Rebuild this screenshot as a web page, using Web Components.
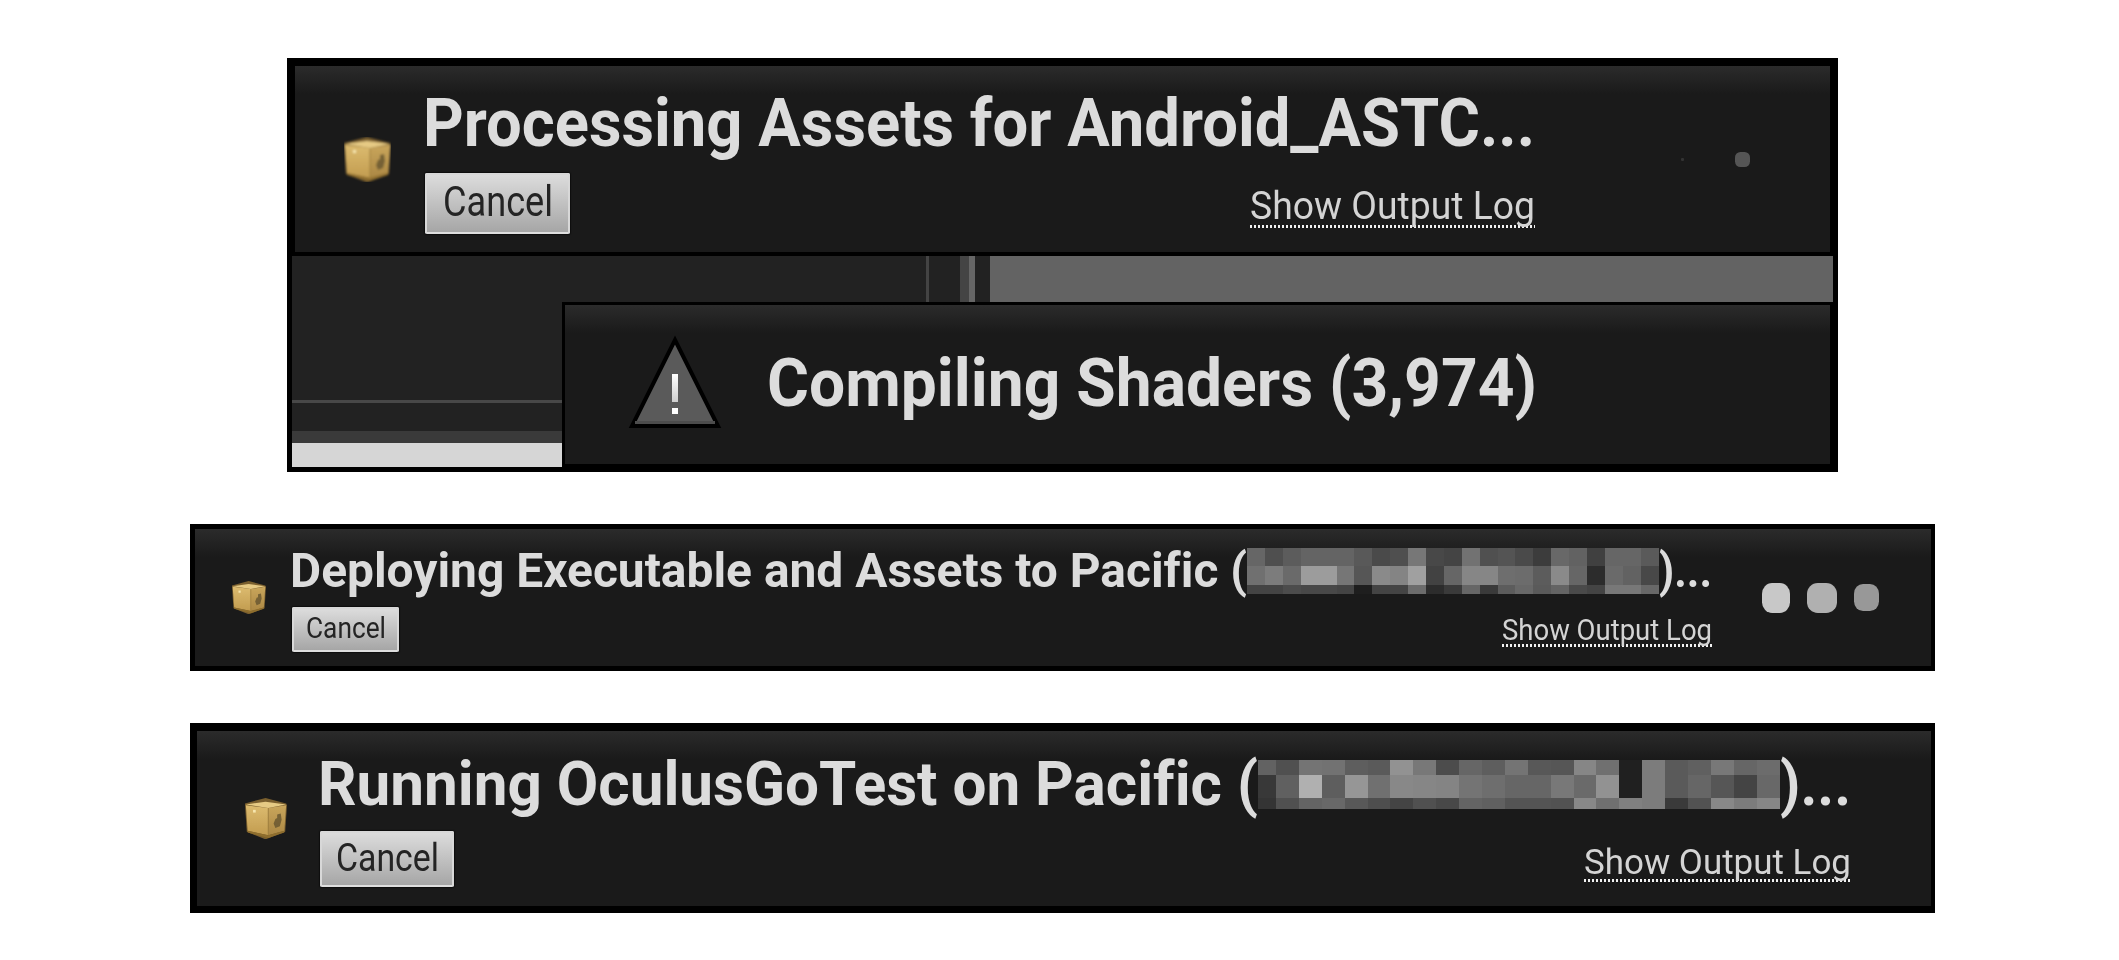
<!DOCTYPE html>
<html>
<head>
<meta charset="utf-8">
<title>Notifications</title>
<style>
  html, body { margin: 0; background: #fff; }
  body {
    display: flex;
    flex-direction: column;
    align-items: center;
    gap: 52px;
    padding: 58px 0 0 6px;
    height: 902px;
    overflow: hidden;
    font-family: Roboto, "Liberation Sans", sans-serif;
    font-variant-ligatures: none;
  }
  .processing { --pad-left: 49px; --icon-gap: 32px; --pad-top: 21px; --row-gap: 12px; --link-drop: 6px; --pad-right: 80px; height: 186px; margin: 0 3px 4px; }
  .compiling { --pad-left: 65px; --icon-gap: 47px; --pad-top: 42px; --row-gap: 0px; height: 159px; }
  .deploying { --pad-left: 37px; --icon-gap: 24px; --pad-top: 14px; --row-gap: 8px; --link-drop: 5px; --pad-right: 52px; height: 137px; }
  .running { --pad-left: 48px; --icon-gap: 31px; --pad-top: 19px; --row-gap: 13px; --link-drop: 5px; height: 175px; }
  ue-button { margin-left: 2px; }
</style>
</head>
<body>

<ue-frame style="--w:1551px; --p:8px 5px 5px">
  <ue-notification class="processing">
    <ue-cube slot="icon" size="47 45"></ue-cube>
    <ue-title slot="title"><ue-text size="66" fit="1112" lh="74" weight="700" color="#dcdcdc">Processing Assets for Android_ASTC...</ue-text></ue-title>
    <ue-button slot="button" w="145" h="61" size="42" fit="110">Cancel</ue-button>
    <ue-log slot="link" size="38" fit="285" lh="40"></ue-log>
    <ue-throbber slot="throbber" gap="51" pieces="3 3 #333333,15 15 #555555"></ue-throbber>
  </ue-notification>
  <ue-stack>
    <ue-backdrop></ue-backdrop>
    <ue-frame style="--w:1271px; --p:3px; justify-self:end; align-self:end">
      <ue-notification class="compiling">
        <ue-warning slot="icon"></ue-warning>
        <ue-title slot="title"><ue-text size="66" fit="770" lh="74" weight="700" color="#dcdcdc">Compiling Shaders (3,974)</ue-text></ue-title>
      </ue-notification>
    </ue-frame>
  </ue-stack>
</ue-frame>

<ue-frame style="--w:1745px; --p:5px 4px 5px 5px">
  <ue-notification class="deploying">
    <ue-cube slot="icon" size="34 33"></ue-cube>
    <ue-title slot="title">
      <ue-text size="48" fit="957" lh="56" weight="700" color="#dcdcdc">Deploying Executable and Assets to Pacific (</ue-text>
      <ue-blur first="18" col="17.9" heights="18 19 9"
        r1="66 4f 5c 64 64 64 59 4a 4f 77 48 44 72 50 54 4a 3c 68 62 40 66 66 5a"
        r2="70 7c 6a 9c 9c 76 56 8a 84 a0 42 66 86 86 6e 6c 5c 8a 66 2c 6a 62 48"
        r3="44 44 4c 48 48 44 1e 44 44 6c 2c 3a 66 3a 5c 68 5a 64 4a 44 78 78 68"></ue-blur>
      <ue-text size="48" fit="53" lh="56" weight="700" color="#dcdcdc">)...</ue-text>
    </ue-title>
    <ue-button slot="button" w="107" h="45" size="30" fit="80">Cancel</ue-button>
    <ue-log slot="link" size="29" fit="210" lh="30"></ue-log>
    <ue-throbber slot="throbber" gap="17" pieces="28 30 #c8c8c8,30 30 #b0b0b0,25 27 #989898"></ue-throbber>
  </ue-notification>
</ue-frame>

<ue-frame style="--w:1745px; --p:8px 4px 7px 7px">
  <ue-notification class="running">
    <ue-cube slot="icon" size="42 41"></ue-cube>
    <ue-title slot="title">
      <ue-text size="61" fit="940" lh="68" weight="700" color="#dcdcdc">Running OculusGoTest on Pacific (</ue-text>
      <ue-blur first="18" col="22.9" heights="15 23 11"
        r1="62 50 74 72 5e 5a 92 78 4c 66 5e 74 58 56 86 70 20 7c 5a 60 78 66 6c"
        r2="38 60 b0 5e 96 70 88 86 84 74 6e 66 66 78 6a 92 20 7c 5a 66 56 44 68"
        r3="34 50 64 68 58 4e 44 50 48 64 60 54 54 52 88 70 80 7c 3a 52 88 7c 86"></ue-blur>
      <ue-text size="61" fit="71" lh="68" weight="700" color="#dcdcdc">)...</ue-text>
    </ue-title>
    <ue-button slot="button" w="134" h="56" size="38" fit="103">Cancel</ue-button>
    <ue-log slot="link" size="35.5" fit="267" lh="36"></ue-log>
  </ue-notification>
</ue-frame>

<script>
class UeFrame extends HTMLElement {
  constructor() {
    super();
    this.attachShadow({ mode: "open" });
    this.shadowRoot.innerHTML = `
      <style>
        :host { display: block; box-sizing: border-box; width: var(--w); padding: var(--p); background: #000; }
      </style>
      <slot></slot>`;
  }
}

class UeNotification extends HTMLElement {
  constructor() {
    super();
    this.attachShadow({ mode: "open" });
    this.shadowRoot.innerHTML = `
      <style>
        :host {
          display: flex;
          align-items: center;
          box-sizing: border-box;
          padding: 0 var(--pad-right, 0px) 0 var(--pad-left);
          background: linear-gradient(#2b2b2b, #1a1a1a 28px) #1a1a1a;
        }
        .content {
          display: flex;
          flex-direction: column;
          align-self: flex-start;
          margin-left: var(--icon-gap);
          padding-top: var(--pad-top);
          gap: var(--row-gap);
        }
        .actions { display: flex; justify-content: space-between; align-items: flex-end; }
        ::slotted([slot="link"]) { margin-bottom: var(--link-drop); }
        ::slotted([slot="throbber"]) { margin-left: auto; }
      </style>
      <slot name="icon"></slot>
      <div class="content">
        <slot name="title"></slot>
        <div class="actions">
          <slot name="button"></slot>
          <slot name="link"></slot>
        </div>
      </div>
      <slot name="throbber"></slot>`;
  }
}

// text that keeps its font height but is squeezed to a measured width
class UeText extends HTMLElement {
  constructor() {
    super();
    this.attachShadow({ mode: "open" });
    this.shadowRoot.innerHTML = `
      <style>
        :host { display: block; flex: none; white-space: nowrap; filter: blur(0.5px); }
        span { display: inline-block; transform-origin: 0 50%; }
      </style>
      <span><slot></slot></span>`;
  }

  connectedCallback() {
    const fit = Number(this.getAttribute("fit"));
    const span = this.shadowRoot.querySelector("span");
    this.style.fontSize = this.getAttribute("size") + "px";
    this.style.lineHeight = (this.getAttribute("lh") || Math.round(this.getAttribute("size") * 1.2)) + "px";
    this.style.fontWeight = this.getAttribute("weight") || 400;
    this.style.color = this.getAttribute("color") || "inherit";
    this.style.width = fit + "px";
    span.style.transform = `scaleX(${fit / span.getBoundingClientRect().width})`;
  }
}

class UeTitle extends HTMLElement {
  constructor() {
    super();
    this.attachShadow({ mode: "open" });
    this.shadowRoot.innerHTML = `
      <style>
        :host { display: flex; align-items: center; }
      </style>
      <slot></slot>`;
  }
}

class UeButton extends HTMLElement {
  constructor() {
    super();
    this.attachShadow({ mode: "open" });
  }

  connectedCallback() {
    const size = this.getAttribute("size");
    const fit = this.getAttribute("fit");
    this.shadowRoot.innerHTML = `
      <style>
        :host {
          display: flex;
          align-items: center;
          justify-content: center;
          box-sizing: border-box;
          width: ${this.getAttribute("w")}px;
          height: ${this.getAttribute("h")}px;
          padding-bottom: 3px;
          border: 2px solid #d8d8d8;
          border-bottom-color: #dedede;
          border-radius: 2px;
          background: linear-gradient(#dcdcdc, #a6a6a6);
          box-shadow: 0 0 1px 1px #0e0e0e;
          filter: blur(0.4px);
        }
      </style>
      <ue-text size="${size}" fit="${fit}" color="#242424"><slot></slot></ue-text>`;
  }
}

class UeLog extends HTMLElement {
  constructor() {
    super();
    this.attachShadow({ mode: "open" });
  }

  connectedCallback() {
    this.shadowRoot.innerHTML = `
      <style>
        :host {
          display: block;
          padding-bottom: 2px;
          background: repeating-linear-gradient(90deg, #f0f0f0 0 2px, transparent 2px 4px) bottom / 100% 3px no-repeat;
        }
      </style>
      <ue-text size="${this.getAttribute("size")}" fit="${this.getAttribute("fit")}" lh="${this.getAttribute("lh")}" color="#d4d4d4">Show Output Log</ue-text>`;
  }
}

class UeThrobber extends HTMLElement {
  constructor() {
    super();
    this.attachShadow({ mode: "open" });
  }

  connectedCallback() {
    const pieces = this.getAttribute("pieces")
      .split(",")
      .map((piece) => {
        const [w, h, color] = piece.split(" ");
        return `<i style="width:${w}px;height:${h}px;background:${color}"></i>`;
      })
      .join("");
    this.shadowRoot.innerHTML = `
      <style>
        :host { display: flex; align-items: center; gap: ${this.getAttribute("gap")}px; }
        i { display: block; border-radius: 36%; filter: blur(0.6px); }
      </style>
      ${pieces}`;
  }
}

class UeBlur extends HTMLElement {
  constructor() {
    super();
    this.attachShadow({ mode: "open" });
  }

  connectedCallback() {
    const rows = ["r1", "r2", "r3"].map((name) => this.getAttribute(name).split(" "));
    const heights = this.getAttribute("heights").split(" ").map((h) => h + "px").join(" ");
    const cells = rows
      .map((row) => row.map((c) => `<i style="background:#${c}${c}${c}"></i>`).join(""))
      .join("");
    this.shadowRoot.innerHTML = `
      <style>
        :host {
          display: grid;
          flex: none;
          grid-template-columns: ${this.getAttribute("first")}px repeat(${rows[0].length - 1}, ${this.getAttribute("col")}px);
          grid-template-rows: ${heights};
        }
      </style>
      ${cells}`;
  }
}

class UeCube extends HTMLElement {
  constructor() {
    super();
    this.attachShadow({ mode: "open" });
  }

  connectedCallback() {
    const [w, h] = this.getAttribute("size").split(" ");
    this.shadowRoot.innerHTML = `
      <style>
        :host { display: block; flex: none; width: ${w}px; height: ${h}px; }
        svg { display: block; width: 100%; height: 100%; }
      </style>
      <svg viewBox="0 0 47 45" preserveAspectRatio="none">
        <defs>
          <filter id="soft" x="-10%" y="-10%" width="120%" height="120%"><feGaussianBlur stdDeviation="0.8"/></filter>
          <linearGradient id="left" x1="0" y1="0" x2="0" y2="1"><stop offset="0" stop-color="#dcbb6f"/><stop offset="1" stop-color="#c29c50"/></linearGradient>
          <linearGradient id="right" x1="0" y1="0" x2="0" y2="1"><stop offset="0" stop-color="#c9a65c"/><stop offset="1" stop-color="#ab8743"/></linearGradient>
        </defs>
        <g filter="url(#soft)">
          <path d="M23 0 46 6 47 8 45 37 24 45 22 45 2 37 0 8 0 6Z" fill="#7a5f2e"/>
          <path d="M1 8 26 11 26 41 3 36Z" fill="url(#left)"/>
          <path d="M26 11 46 8 44 36 26 41Z" fill="url(#right)"/>
          <path d="M1 7 23 4 46 7 26 11Z" fill="#e6ca84"/>
          <path d="M26 11V41" stroke="#a0803f" stroke-width="1"/>
          <rect x="9" y="13" width="3" height="3" fill="#f6e6ae"/>
          <path d="M32 28 34 23 36 22 36 18 40 17 41 24 39 31 34 33Z" fill="#6a5830" opacity="0.85"/>
          <path d="M3 36 26 41 44 36 44 38 26 44 3 38Z" fill="#8f6e2d"/>
        </g>
      </svg>`;
  }
}

class UeWarning extends HTMLElement {
  constructor() {
    super();
    this.attachShadow({ mode: "open" });
    this.shadowRoot.innerHTML = `
      <style>
        :host { display: block; flex: none; width: 90px; height: 90px; margin-top: -3px; }
        svg { display: block; overflow: visible; filter: blur(0.7px); }
      </style>
      <svg width="90" height="90" viewBox="0 0 90 90">
        <defs><linearGradient id="bar" x1="0" y1="0" x2="0" y2="1"><stop offset="0" stop-color="#fff"/><stop offset="1" stop-color="#cfcfcf"/></linearGradient></defs>
        <path d="M45 2 88 88H2Z" fill="#5a5a5a" stroke="#000" stroke-width="4"/>
        <rect x="5" y="83" width="80" height="3" fill="#4c4c4c"/>
        <rect x="42" y="36" width="6" height="28" fill="url(#bar)"/>
        <rect x="42" y="70" width="6" height="6" fill="#fff"/>
      </svg>`;
  }
}

// overlays its children in one grid cell
class UeStack extends HTMLElement {
  constructor() {
    super();
    this.attachShadow({ mode: "open" });
    this.shadowRoot.innerHTML = `
      <style>
        :host { display: grid; height: 211px; }
        ::slotted(*) { grid-area: 1 / 1; }
      </style>
      <slot></slot>`;
  }
}

// the editor showing behind the notifications
class UeBackdrop extends HTMLElement {
  constructor() {
    super();
    this.attachShadow({ mode: "open" });
    this.shadowRoot.innerHTML = `
      <style>
        :host { display: flex; flex-direction: column; background: #222; }
        .top { display: flex; height: 46px; padding-left: 634px; }
        .top i { display: block; }
        .a { width: 3px; background: #444; margin-right: 31px; }
        .b { width: 9px; background: #444; }
        .c { width: 6px; background: #666; margin-right: 15px; }
        .d { flex: 1; background: #636363; }
        .line { height: 3px; background: #484848; margin-top: 98px; }
        .band { height: 12px; background: #3a3a3a; margin-top: 28px; }
        .light { height: 24px; background: #d6d6d6; }
      </style>
      <div class="top"><i class="a"></i><i class="b"></i><i class="c"></i><i class="d"></i></div>
      <div class="line"></div>
      <div class="band"></div>
      <div class="light"></div>`;
  }
}

customElements.define("ue-frame", UeFrame);
customElements.define("ue-text", UeText);
customElements.define("ue-title", UeTitle);
customElements.define("ue-button", UeButton);
customElements.define("ue-log", UeLog);
customElements.define("ue-throbber", UeThrobber);
customElements.define("ue-blur", UeBlur);
customElements.define("ue-cube", UeCube);
customElements.define("ue-warning", UeWarning);
customElements.define("ue-stack", UeStack);
customElements.define("ue-backdrop", UeBackdrop);
customElements.define("ue-notification", UeNotification);
</script>
</body>
</html>
